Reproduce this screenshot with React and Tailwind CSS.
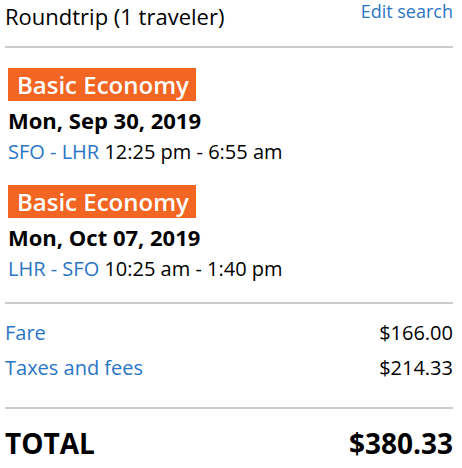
export default function App() {
  const legs = [
    { date: "Mon, Sep 30, 2019", route: "SFO - LHR", time: "12:25 pm - 6:55 am" },
    { date: "Mon, Oct 07, 2019", route: "LHR - SFO", time: "10:25 am - 1:40 pm" },
  ];

  return (
    <div className="w-[462px] bg-white pl-[5px] pr-[9px] text-black" style={{ fontFamily: '"Open Sans", sans-serif' }}>
      {/* HEADER */}
      <div className="flex items-start justify-between">
        <div className="pt-[1px] text-[22px] leading-[30px]">Roundtrip (1 traveler)</div>
        <a className="pt-[1px] text-[18px] leading-[20px] text-[#2a76c4]">Edit search</a>
      </div>
      <div className="mt-[15px] h-[2px] bg-[#cccccc]" />

      {/* LEGS */}
      <div className="pl-[3px] pt-[20px]">
        {legs.map((leg, i) => (
          <div key={i} className={i > 0 ? "mt-[19px]" : ""}>
            <div className="h-[33px] w-[188px] bg-[#f26522] pl-[9px] text-[24px] font-semibold leading-[33px] text-white">
              Basic Economy
            </div>
            <div className="mt-[4px] text-[22px] font-bold leading-[30px]">{leg.date}</div>
            <div className="mt-[3px] text-[20px] leading-[28px]">
              <span className="text-[#2a76c4]">{leg.route}</span> {leg.time}
            </div>
          </div>
        ))}
      </div>
      <div className="mt-[19px] h-[2px] bg-[#cccccc]" />

      {/* FARE */}
      <div className="pt-[15px]">
        <div className="flex justify-between text-[20px] leading-[28px]">
          <span className="text-[#2a76c4]">Fare</span>
          <span>$166.00</span>
        </div>
        <div className="mt-[7px] flex justify-between text-[20px] leading-[28px]">
          <span className="text-[#2a76c4]">Taxes and fees</span>
          <span>$214.33</span>
        </div>
      </div>
      <div className="mt-[25px] h-[2px] bg-[#cccccc]" />

      {/* TOTAL */}
      <div className="mt-[15px] flex justify-between text-[28px] font-bold leading-[38px]">
        <span>TOTAL</span>
        <span>$380.33</span>
      </div>
    </div>
  );
}
